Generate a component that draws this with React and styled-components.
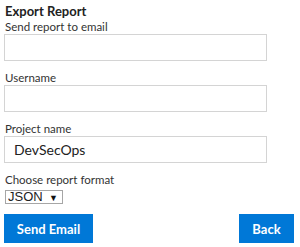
import React from "react";
import styled, { createGlobalStyle } from "styled-components";

const GlobalStyle = createGlobalStyle`
    body {
        margin: 0;
        background: #fff;
        font-family: Lato, "Open Sans", sans-serif;
        color: #333;
    }
`;

const Panel = styled.div`
    width: 300px;
    padding: 2px 4px 0 4px;
    box-sizing: border-box;
`;

const Title = styled.h1`
    margin: 0 0 0 1px;
    font-size: 13px;
    line-height: 18px;
    font-weight: 700;
    color: #222;
`;

const Field = styled.div`
    display: flex;
    flex-direction: column;
    margin-bottom: ${props => props.gap || 10}px;
`;

const Label = styled.label`
    font-size: 11.5px;
    line-height: 14px;
    padding-left: 1px;
    color: #333;
`;

const TextInput = styled.input`
    width: 263px;
    height: 27px;
    box-sizing: border-box;
    border: 1px solid #d4d4d4;
    padding: 0 9px;
    font-family: Lato, "Open Sans", sans-serif;
    font-size: 14px;
    color: #222;
    outline: none;
`;

const SelectBox = styled.div`
    margin: 3px 0 0 1px;
    width: 58px;
    height: 14px;
    box-sizing: border-box;
    border: 1px solid #a6a6a6;
    display: flex;
    align-items: center;
    justify-content: space-between;
    padding: 0 4px 0 2px;
`;

const Select = styled.select`
    appearance: none;
    border: none;
    background: transparent;
    padding: 0;
    font-family: "Liberation Sans", Arial, sans-serif;
    font-size: 13px;
    font-weight: 400;
    line-height: 12px;
    color: #222;
    outline: none;
`;

const Arrow = styled.span`
    font-size: 9px;
    color: #111;
    line-height: 1;
`;

const Actions = styled.div`
    display: flex;
    justify-content: space-between;
    width: 290px;
    margin-top: 9px;
`;

const Button = styled.button`
    height: 29px;
    width: ${props => props.w}px;
    border: none;
    background: #0078d7;
    color: #fff;
    font-family: Lato, "Open Sans", sans-serif;
    font-size: 13px;
    font-weight: 700;
    cursor: pointer;
`;

export default function App() {
    return (
        <Panel>
            <GlobalStyle />
            <Title>Export Report</Title>
            <Field>
                <Label>Send report to email</Label>
                <TextInput type="text" />
            </Field>
            <Field>
                <Label>Username</Label>
                <TextInput type="text" />
            </Field>
            <Field>
                <Label>Project name</Label>
                <TextInput type="text" defaultValue="DevSecOps" />
            </Field>
            <Field gap={0}>
                <Label>Choose report format</Label>
                <SelectBox>
                    <Select defaultValue="JSON">
                        <option>JSON</option>
                        <option>XML</option>
                        <option>CSV</option>
                    </Select>
                    <Arrow>▼</Arrow>
                </SelectBox>
            </Field>
            <Actions>
                <Button w={89}>Send Email</Button>
                <Button w={55}>Back</Button>
            </Actions>
        </Panel>
    );
}
